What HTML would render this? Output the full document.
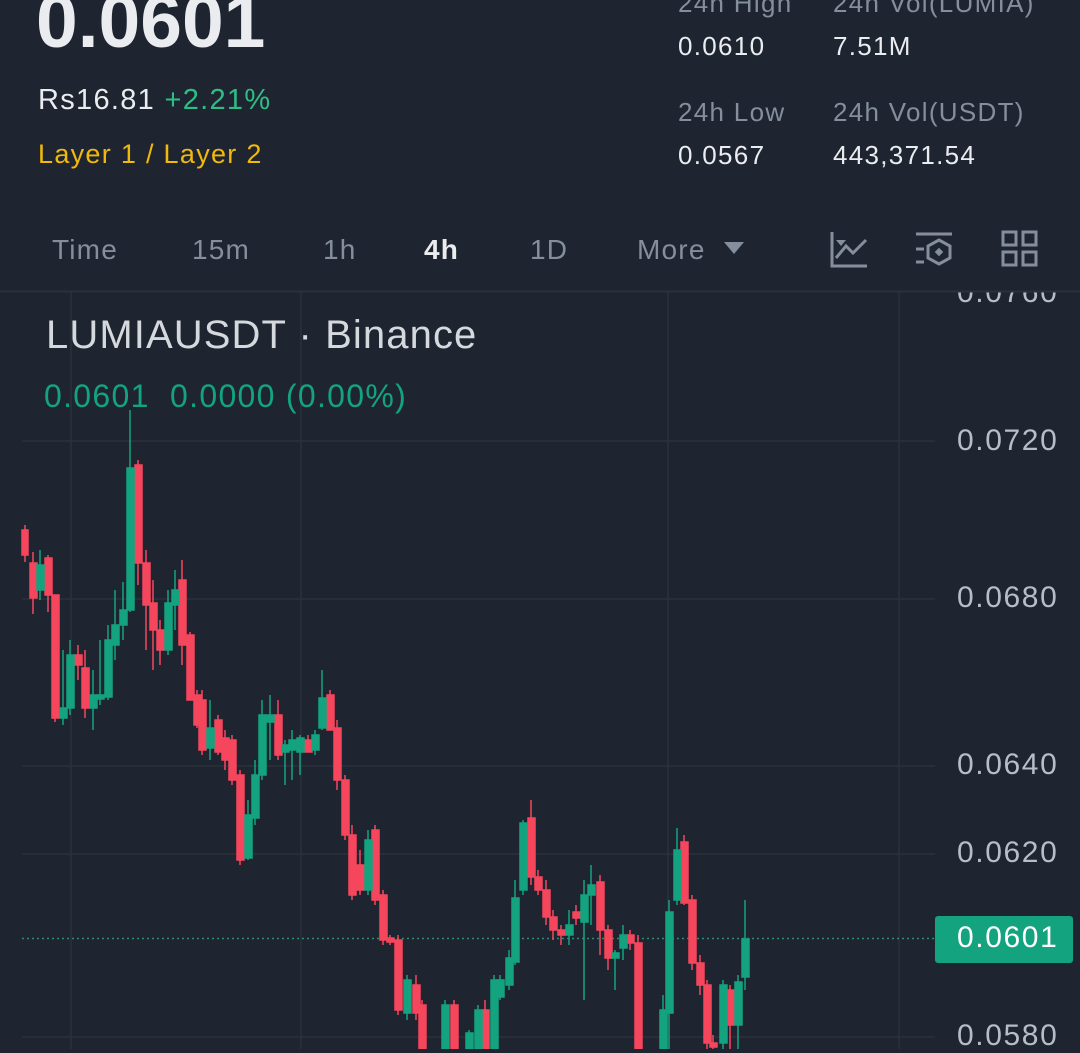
<!DOCTYPE html>
<html><head><meta charset="utf-8"><style>
body{margin:0;width:1080px;height:1049px;overflow:hidden;background:#1e2530;font-family:"Liberation Sans",sans-serif;position:relative}
.a{position:absolute;white-space:nowrap}
.t{font-size:28px;letter-spacing:1.2px}
.r{font-size:26px;letter-spacing:1.3px}
.y{font-size:30px;color:#b7bdc6;letter-spacing:1.6px}
</style></head><body>
<div class="a" style="left:36px;top:-22px;font-size:75px;font-weight:bold;color:#eaecef;letter-spacing:0px">0.0601</div>
<div class="a" style="left:38px;top:84px;font-size:29px;color:#eaecef;letter-spacing:1.3px">Rs16.81 <span style="color:#2ebd85">+2.21%</span></div>
<div class="a" style="left:38px;top:139px;font-size:27px;color:#f0b90b;letter-spacing:1.3px">Layer 1 / Layer 2</div>
<div class="a r" style="left:678px;top:-12px;color:#848e9c">24h High</div>
<div class="a r" style="left:833px;top:-12px;color:#848e9c">24h Vol(LUMIA)</div>
<div class="a r" style="left:678px;top:31px;color:#eaecef">0.0610</div>
<div class="a r" style="left:833px;top:31px;color:#eaecef">7.51M</div>
<div class="a r" style="left:678px;top:97px;color:#848e9c">24h Low</div>
<div class="a r" style="left:833px;top:97px;color:#848e9c">24h Vol(USDT)</div>
<div class="a r" style="left:678px;top:140px;color:#eaecef">0.0567</div>
<div class="a r" style="left:833px;top:140px;color:#eaecef">443,371.54</div>
<div class="a t" style="left:52px;top:234px;color:#848e9c">Time</div>
<div class="a t" style="left:192px;top:234px;color:#848e9c">15m</div>
<div class="a t" style="left:323px;top:234px;color:#848e9c">1h</div>
<div class="a t" style="left:424px;top:234px;color:#eaecef;font-weight:bold">4h</div>
<div class="a t" style="left:530px;top:234px;color:#848e9c">1D</div>
<div class="a t" style="left:637px;top:234px;color:#848e9c">More</div>
<div class="a" style="left:940px;top:292px;width:140px;height:40px;overflow:hidden"><div class="a y" style="left:17px;top:-16px">0.0760</div></div>
<svg class="a" style="left:0;top:0" width="1080" height="1049">
<polygon points="724,242 744,242 734,254" fill="#848e9c"/>
<g stroke="#848e9c" stroke-width="3" fill="none">
<path d="M832,232V266H867"/><path d="M836,258L846,246L853,253L866,240"/>
<path d="M916,234H952M916,249H924M916,262H924"/>
<path d="M939,240L950,246V258L939,264L928,258V246Z"/>
<rect x="1003" y="232" width="13" height="13"/><rect x="1023" y="232" width="13" height="13"/>
<rect x="1003" y="252" width="13" height="13"/><rect x="1023" y="252" width="13" height="13"/>
</g>
<polygon points="836,240 846,240 841,246" fill="#848e9c"/>
<rect x="936" y="249" width="6" height="6" fill="#848e9c" transform="rotate(45 939 252)"/>
<line x1="0" y1="291.5" x2="1080" y2="291.5" stroke="#2b3139" stroke-width="2"/>
<g stroke="#2a313b" stroke-width="1.5">
<line x1="22" y1="441" x2="935" y2="441"/><line x1="22" y1="599" x2="935" y2="599"/>
<line x1="22" y1="766" x2="935" y2="766"/><line x1="22" y1="854" x2="935" y2="854"/>
<line x1="22" y1="1037" x2="935" y2="1037"/>
<line x1="71" y1="292" x2="71" y2="1049"/><line x1="301" y1="292" x2="301" y2="1049"/>
<line x1="668" y1="292" x2="668" y2="1049"/><line x1="899" y1="292" x2="899" y2="1049"/>
</g>
<line x1="22" y1="938.5" x2="935" y2="938.5" stroke="#2ebd85" stroke-width="1.5" stroke-dasharray="2,3" opacity=".7"/>
<g fill="#f6465d" stroke="#f6465d" stroke-width="1.5">
<path d="M25,525V562M33,552V614M48,555V612M55,595V722M78,645V680M85,650V718M138,460V585M146,550V650M153,580V670M160,620V665M182,560V665M190,632V700M197,690V728M202,690V755M218,715V755M225,730V770M232,735V785M240,770V865M278,700V760M308,735V752M330,690V730M337,720V790M345,775V840M352,825V900M360,850V895M375,825V905M383,890V945M390,935V945M398,935V1015M416,975V1020M422,1000V1049M454,1000V1049M485,1000V1049M531,800V885M538,870V895M546,880V925M553,910V940M561,925V945M576,905V925M600,875V955M608,925V970M630,930V950M638,935V1049M684,835V905M692,895V970M700,955V995M707,980V1049M713,1035V1049M730,985V1049"/>
<rect x="22" y="530" width="6" height="25"/><rect x="30" y="563" width="7" height="35"/><rect x="45" y="558" width="7" height="37"/><rect x="52" y="595" width="7" height="123"/><rect x="75" y="655" width="7" height="10"/><rect x="82" y="668" width="7" height="40"/><rect x="135" y="465" width="7" height="98"/><rect x="143" y="563" width="7" height="42"/><rect x="150" y="603" width="7" height="27"/><rect x="157" y="630" width="7" height="20"/><rect x="179" y="580" width="7" height="65"/><rect x="187" y="635" width="7" height="65"/><rect x="194" y="695" width="7" height="30"/><rect x="199" y="700" width="7" height="50"/><rect x="215" y="720" width="7" height="32"/><rect x="222" y="738" width="7" height="22"/><rect x="229" y="740" width="7" height="40"/><rect x="237" y="775" width="7" height="85"/><rect x="275" y="715" width="7" height="40"/><rect x="305" y="740" width="7" height="12"/><rect x="327" y="695" width="7" height="35"/><rect x="334" y="728" width="7" height="52"/><rect x="342" y="780" width="7" height="55"/><rect x="349" y="835" width="7" height="60"/><rect x="357" y="865" width="7" height="25"/><rect x="372" y="830" width="7" height="70"/><rect x="380" y="895" width="7" height="45"/><rect x="387" y="938" width="7" height="4"/><rect x="395" y="940" width="7" height="70"/><rect x="413" y="985" width="7" height="28"/><rect x="419" y="1005" width="7" height="44"/><rect x="451" y="1005" width="7" height="44"/><rect x="482" y="1010" width="7" height="39"/><rect x="528" y="818" width="7" height="59"/><rect x="535" y="877" width="7" height="13"/><rect x="543" y="890" width="7" height="27"/><rect x="550" y="917" width="7" height="13"/><rect x="558" y="930" width="7" height="5"/><rect x="573" y="912" width="7" height="6"/><rect x="597" y="882" width="7" height="48"/><rect x="605" y="930" width="7" height="28"/><rect x="627" y="935" width="7" height="8"/><rect x="635" y="943" width="7" height="106"/><rect x="681" y="842" width="7" height="61"/><rect x="689" y="900" width="7" height="63"/><rect x="697" y="963" width="7" height="22"/><rect x="704" y="985" width="7" height="58"/><rect x="710" y="1043" width="7" height="4"/><rect x="727" y="990" width="7" height="35"/>
</g>
<g style="fill:#14a37f;stroke:#14a37f" stroke-width="1.5">
<path d="M40,550V600M63,650V725M70,640V715M93,670V730M100,640V705M108,625V700M115,590V660M123,582V640M130,410V612M168,590V655M175,570V630M210,700V760M248,800V860M255,760V825M262,700V780M270,695V760M285,740V785M292,730V780M300,735V775M315,730V755M322,670V730M368,830V895M407,975V1020M445,1000V1049M469,1030V1049M478,1005V1049M494,975V1049M500,975V1000M509,950V990M515,880V965M523,820V895M569,910V945M584,880V1000M591,865V925M615,950V990M623,925V960M663,995V1049M669,900V1049M677,828V905M723,980V1049M738,975V1049M745,900V990"/>
<rect x="37" y="565" width="7" height="25"/><rect x="60" y="708" width="7" height="10"/><rect x="67" y="655" width="7" height="53"/><rect x="90" y="695" width="7" height="13"/><rect x="97" y="695" width="7" height="4"/><rect x="105" y="640" width="7" height="57"/><rect x="112" y="625" width="7" height="20"/><rect x="120" y="610" width="7" height="15"/><rect x="127" y="468" width="7" height="142"/><rect x="165" y="603" width="7" height="47"/><rect x="172" y="590" width="7" height="15"/><rect x="207" y="728" width="7" height="20"/><rect x="245" y="815" width="7" height="43"/><rect x="252" y="775" width="7" height="43"/><rect x="259" y="715" width="7" height="60"/><rect x="267" y="715" width="7" height="7"/><rect x="282" y="745" width="7" height="7"/><rect x="289" y="740" width="7" height="10"/><rect x="297" y="738" width="7" height="14"/><rect x="312" y="735" width="7" height="15"/><rect x="319" y="698" width="7" height="30"/><rect x="365" y="840" width="7" height="50"/><rect x="404" y="980" width="7" height="33"/><rect x="442" y="1005" width="7" height="44"/><rect x="466" y="1033" width="7" height="16"/><rect x="475" y="1010" width="7" height="39"/><rect x="491" y="980" width="7" height="69"/><rect x="497" y="980" width="7" height="17"/><rect x="506" y="958" width="7" height="27"/><rect x="512" y="898" width="7" height="64"/><rect x="520" y="823" width="7" height="67"/><rect x="566" y="925" width="7" height="10"/><rect x="581" y="895" width="7" height="27"/><rect x="588" y="885" width="7" height="10"/><rect x="612" y="953" width="7" height="5"/><rect x="620" y="935" width="7" height="13"/><rect x="660" y="1010" width="7" height="39"/><rect x="666" y="912" width="7" height="101"/><rect x="674" y="850" width="7" height="50"/><rect x="720" y="985" width="7" height="58"/><rect x="735" y="982" width="7" height="43"/><rect x="742" y="939" width="7" height="38"/>
</g>
<rect x="935" y="916" width="138" height="47" rx="3" fill="#14a37f"/>
</svg>
<div class="a" style="left:46px;top:313px;font-size:40px;color:#d5d8dc;letter-spacing:1.1px">LUMIAUSDT · Binance</div>
<div class="a" style="left:44px;top:378px;font-size:32px;color:#14a37f;letter-spacing:1.3px">0.0601&nbsp; 0.0000 (0.00%)</div>
<div class="a y" style="left:957px;top:424px">0.0720</div>
<div class="a y" style="left:957px;top:581px">0.0680</div>
<div class="a y" style="left:957px;top:748px">0.0640</div>
<div class="a y" style="left:957px;top:836px">0.0620</div>
<div class="a y" style="left:957px;top:921px;color:#fff">0.0601</div>
<div class="a y" style="left:957px;top:1019px">0.0580</div>
</body></html>
